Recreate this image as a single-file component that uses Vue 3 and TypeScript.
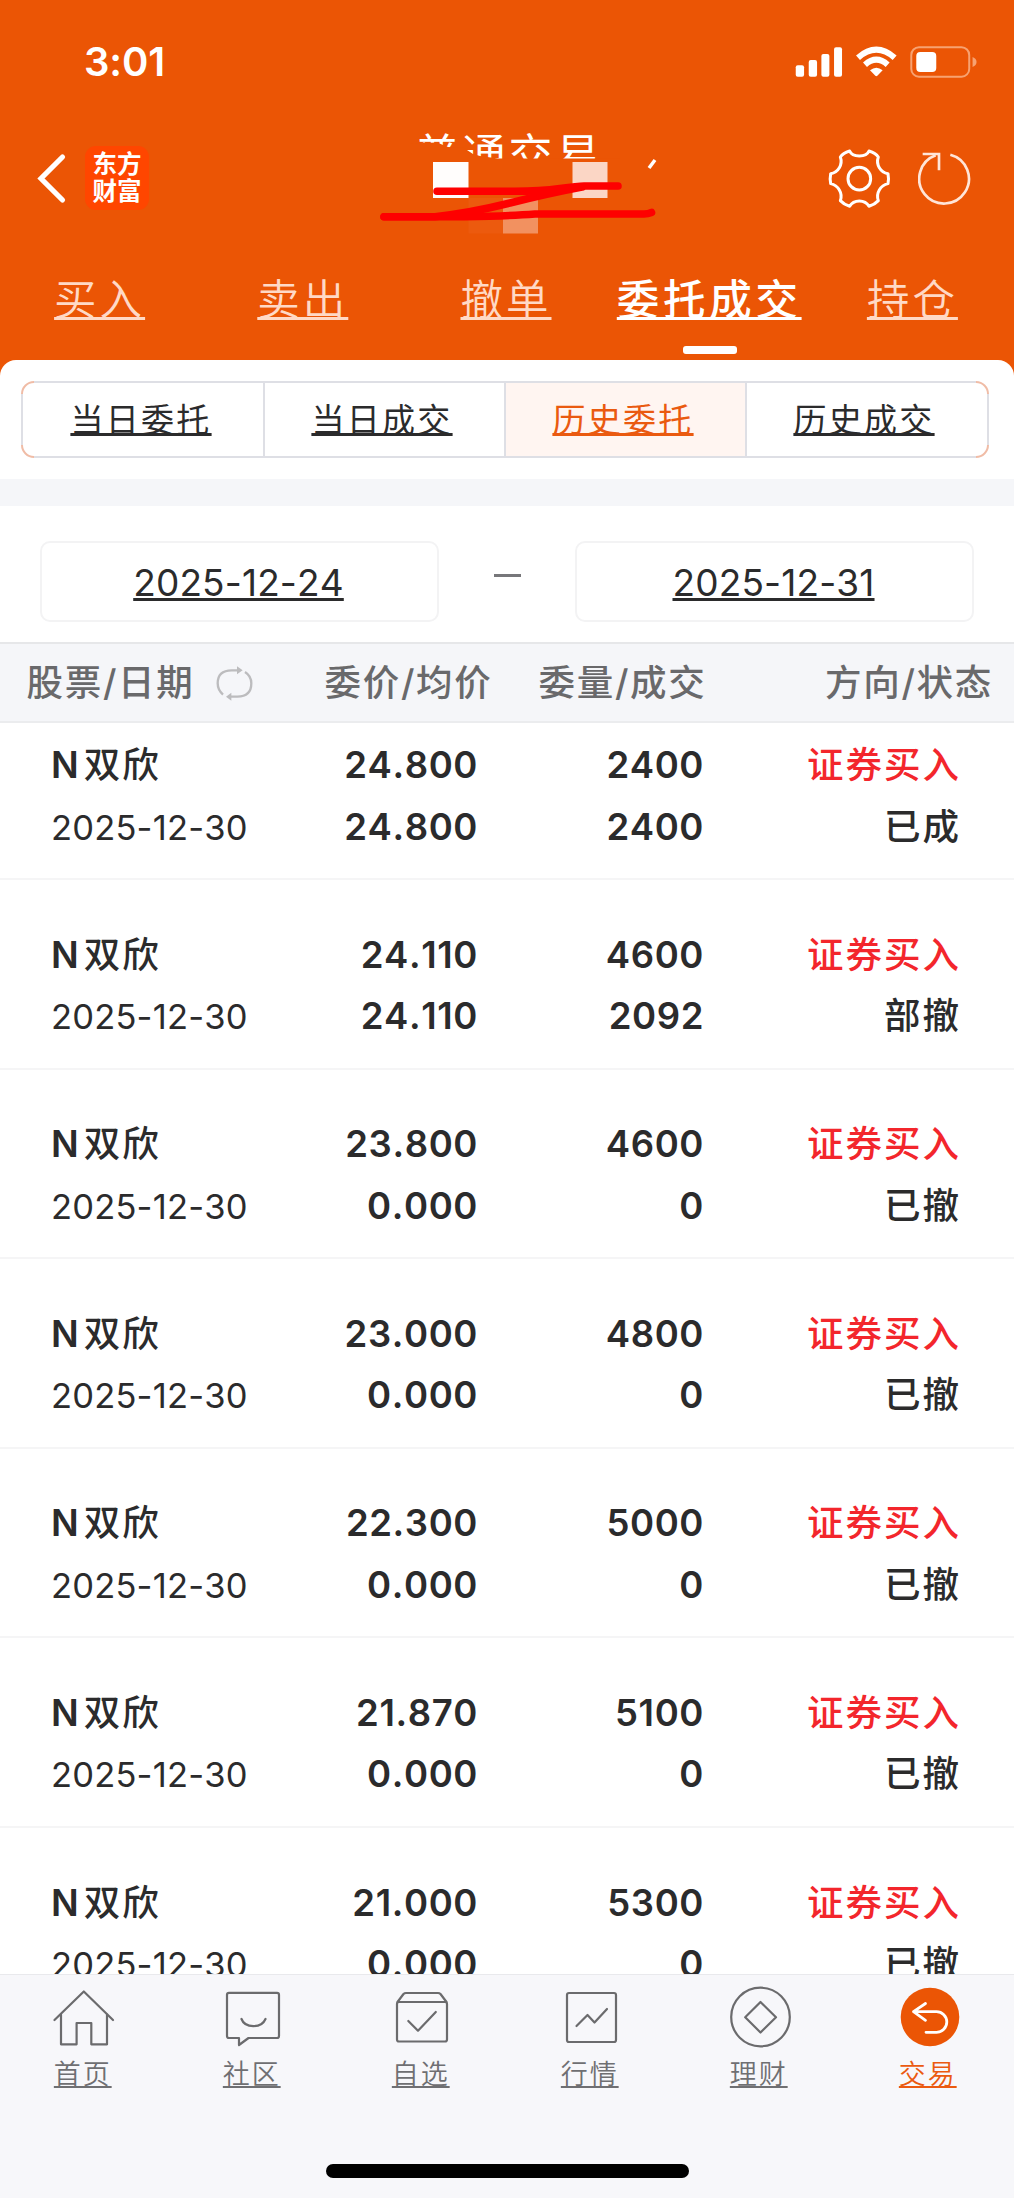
<script setup lang="ts">
interface Order {
  price: string
  avg: string
  qty: number
  done: number
  status: string
}

const tabs: string[] = ['买入', '卖出', '撤单', '委托成交', '持仓']
const activeTab = '委托成交'
const segments: string[] = ['当日委托', '当日成交', '历史委托', '历史成交']
const activeSegment = '历史委托'

const orders: Order[] = [
  { price: '24.800', avg: '24.800', qty: 2400, done: 2400, status: '已成' },
  { price: '24.110', avg: '24.110', qty: 4600, done: 2092, status: '部撤' },
  { price: '23.800', avg: '0.000', qty: 4600, done: 0, status: '已撤' },
  { price: '23.000', avg: '0.000', qty: 4800, done: 0, status: '已撤' },
  { price: '22.300', avg: '0.000', qty: 5000, done: 0, status: '已撤' },
  { price: '21.870', avg: '0.000', qty: 5100, done: 0, status: '已撤' },
  { price: '21.000', avg: '0.000', qty: 5300, done: 0, status: '已撤' },
]

const navItems: string[] = ['首页', '社区', '自选', '行情', '理财', '交易']
</script>

<template>
  <div class="app">
    <header class="top">
      <div class="status">
        <span class="time">3:01</span>
        <svg class="status-icons" viewBox="860 135 550 100" fill="#fff">
          <rect x="865" y="196" width="25" height="34" rx="6" />
          <rect x="904" y="180" width="25" height="50" rx="6" />
          <rect x="942" y="162" width="24" height="68" rx="6" />
          <rect x="980" y="142" width="24" height="88" rx="6" />
          <g fill="none" stroke="#fff" stroke-width="18">
            <path d="M1052 173 Q1107 125 1162 173" />
            <path d="M1073 194 Q1107 164 1141 194" />
          </g>
          <path d="M1088 211 Q1107 196 1126 211 L1110 227 Q1107 230 1104 227 Z" />
          <rect x="1212" y="142" width="174" height="88" rx="23" fill="none" stroke="#f7a271" stroke-width="6" />
          <rect x="1227" y="156" width="60" height="60" rx="12" />
          <path d="M1396 171 Q1408 176 1408 186 T1396 201 Z" fill="#f7a271" />
        </svg>
      </div>

      <div class="bar">
        <svg class="back" viewBox="0 0 30 52" fill="none" stroke="#fff" stroke-width="5.2" stroke-linecap="round" stroke-linejoin="miter">
          <path d="M25.5 5 L4 26.5 L25.5 48" />
        </svg>
        <div class="logo"><span>东方</span><span>财富</span></div>
        <div class="title-wrap">
          <h1 class="title">普通交易</h1>
          <svg class="scribble" viewBox="0 0 320 140">
            <path d="M50 33.500 L77 32.500 L88 37 L104 38 L113 44 L120 46 L138 48.5 H260 V78 H50 Z" fill="#eb5505" />
            <path d="M289 58 L295 50" stroke="#fff" stroke-width="3.5" />
            <rect x="73" y="52" width="35.5" height="36" fill="#fffdfc" />
            <rect x="212.500" y="52" width="35" height="36" fill="#fbd6c5" />
            <rect x="108.500" y="88" width="34.500" height="35.500" fill="#ec5a0e" />
            <rect x="143" y="88" width="35" height="35.500" fill="#f29160" />
            <g fill="none" stroke="#fe0000" stroke-width="7.600" stroke-linecap="round" stroke-linejoin="round">
              <path d="M77 81.300 H155 Q180 81.300 200 78.500 T225 76 H258" />
              <path d="M24 106.700 H75 Q110 103 150 93 T222 77" />
              <path d="M24 106.700 H105 Q150 106 175 104 H284 Q288 104 291.500 102.500" />
            </g>
          </svg>
        </div>
        <svg class="gear" viewBox="960 440 195 190" fill="none" stroke="#fff" stroke-width="9" stroke-linejoin="round">
          <path d="M1028 452 Q1034 467 1057 467 T1086 452 Q1106 458 1114 470 Q1108 487 1117 502 T1143 520 Q1146 535 1143 550 Q1126 554 1117 569 T1114 601 Q1103 613 1086 618 Q1077 602 1057 602 T1028 618 Q1011 613 1000 601 Q1006 584 997 569 T971 550 Q968 535 971 520 Q988 517 997 502 T1000 470 Q1008 458 1028 452 Z" />
          <circle cx="1057" cy="535" r="34" />
        </svg>
        <svg class="reload" viewBox="1230 450 165 170" fill="none" stroke="#ffe5d8" stroke-width="8">
          <path d="M1327 464 A74.500 74.500 0 1 1 1283 466" />
          <path d="M1244 462 H1293 V511" />
        </svg>
      </div>

      <nav class="tabs">
        <a v-for="t in tabs" :key="t" class="tab" :class="{ active: t === activeTab }"><span>{{ t }}</span></a>
      </nav>
    </header>

    <main class="sheet">
      <div class="segments">
        <a v-for="s in segments" :key="s" class="segment" :class="{ active: s === activeSegment }"><span>{{ s }}</span></a>
      </div>
      <div class="gap"></div>
      <div class="dates">
        <div class="date"><span>2025-12-24</span></div>
        <i class="dash"></i>
        <div class="date"><span>2025-12-31</span></div>
      </div>

      <div class="thead">
        <span class="c1">股票/日期
          <svg class="swap" viewBox="643 495 117 112" fill="none" stroke="#bcbcbe" stroke-width="7">
            <path d="M667 584 Q651 570 651 550 Q651 511 693 511 H716" />
            <path d="M733 516 Q752 528 752 550 Q752 590 710 590 H684" />
            <path d="M709 499 L726 511 L709 523 Z M692 578 L676 590 L692 602 Z" fill="#bcbcbe" stroke="none" />
          </svg>
        </span>
        <span class="c2">委价/均价</span>
        <span class="c3">委量/成交</span>
        <span class="c4">方向/状态</span>
      </div>

      <div class="list">
        <div v-for="(o, i) in orders" :key="i" class="row">
          <span class="name">N<b>双欣</b></span>
          <span class="num">{{ o.price }}</span>
          <span class="num">{{ o.qty }}</span>
          <span class="side">证券买入</span>
          <span class="day">2025-12-30</span>
          <span class="num">{{ o.avg }}</span>
          <span class="num">{{ o.done }}</span>
          <span class="state">{{ o.status }}</span>
        </div>
      </div>
    </main>

    <footer class="bottom">
      <div class="nav">
        <a v-for="(n, i) in navItems" :key="n" class="nav-item" :class="{ active: i === 5 }">
          <svg viewBox="0 0 62 64" fill="none" stroke="#6b6b6d" stroke-width="2.2" stroke-linecap="round" stroke-linejoin="round">
            <g v-if="i === 0">
              <path d="M1.500 35 L30.800 6.500 L60 35" />
              <path d="M8 29.500 V59.300 H23.600 V38 H38.300 V59.300 H54 V29.500" />
            </g>
            <path v-else-if="i === 1" d="M7 7.800 H55 Q57 7.800 57 9.800 V51 Q57 53 55 53 H26.500 L17 60 V53 H7 Q5 53 5 51 V9.800 Q5 7.800 7 7.800 Z M19.500 34 C23 43.500 39.500 43.500 43.500 34" />
            <g v-else-if="i === 2">
              <rect x="6" y="17" width="50" height="39.500" rx="2" />
              <path d="M6.500 17 L12.500 9 Q13.500 8 15 8 H47 Q48.500 8 49.500 9 L55.500 17" />
              <path d="M17.300 36 L27 45.700 L44.800 27" />
            </g>
            <g v-else-if="i === 3">
              <rect x="7" y="8" width="49" height="49" rx="2" />
              <path d="M16.500 41 L27.500 30 L34.500 37.500 L47 24" />
            </g>
            <g v-else-if="i === 4">
              <circle cx="31.500" cy="32" r="29.300" />
              <path d="M31.500 17 L47 32.300 L31.500 47.500 L16.200 32.300 Z" />
            </g>
            <g v-else>
              <circle cx="32" cy="32" r="29.300" fill="#eb5505" stroke="none" />
              <path d="M27.500 18.500 L15.500 26.700 L27.500 35.300 M15.500 26.700 H38.500 A10.300 10.300 0 0 1 38.500 47.300 H28" stroke="#fff" stroke-width="2.800" />
            </g>
          </svg>
          <span>{{ n }}</span>
        </a>
      </div>
      <div class="home-bar"></div>
    </footer>
  </div>
</template>

<style>
body {
  margin: 0;
  background: #fff;
}
</style>

<style scoped>
.app {
  width: 1014px;
  height: 2198px;
  display: flex;
  flex-direction: column;
  overflow: hidden;
  background: #eb5505;
  color: #2b2b2c;
  font-family: Inter, "Noto Sans CJK SC", sans-serif;
  font-kerning: none;
}
.top {
  height: 359.500px;
  flex: none;
  color: #fff;
}
.status {
  height: 78px;
  padding: 45px 37px 0 84px;
  box-sizing: border-box;
  display: flex;
  justify-content: space-between;
}
.time {
  font-size: 40px;
  font-weight: 600;
  line-height: 34px;
  letter-spacing: -0.1px;
}
.status-icons {
  width: 183.300px;
  height: 33.300px;
}
.bar {
  height: 174px;
  display: flex;
  align-items: flex-start;
}
.back {
  width: 30px;
  height: 52px;
  margin: 74px 0 0 36.500px;
}
.logo {
  width: 64px;
  height: 64px;
  margin: 67.500px 0 0 18.500px;
  border-radius: 11px;
  background: #ff4600;
  display: flex;
  flex-direction: column;
  align-items: center;
  justify-content: center;
  font-size: 24.500px;
  font-weight: 700;
  line-height: 27px;
}
.title-wrap {
  position: relative;
  width: 320px;
  height: 140px;
  margin: 32px 0 0 211px;
}
.title {
  margin: 23px 0 0;
  padding-left: 55px;
  font-size: 44px;
  font-weight: 400;
  line-height: 44px;
  letter-spacing: 2.800px;
  white-space: nowrap;
}
.scribble {
  position: absolute;
  left: 0;
  top: 0;
  width: 320px;
  height: 140px;
}
.gear {
  width: 65px;
  height: 63.300px;
  margin: 68.700px 0 0 147px;
}
.reload {
  width: 55px;
  height: 56.700px;
  margin: 72px 0 0 26px;
}
.tabs {
  display: grid;
  grid-template-columns: repeat(5, 1fr);
  margin: 16px 0 0 -2px;
  height: 91px;
}
.tab {
  display: flex;
  flex-direction: column;
  align-items: center;
  color: #ffd9c6;
  font-size: 42.500px;
  font-weight: 350;
  line-height: 64px;
  letter-spacing: 3px;
}
.tab span {
  text-decoration: underline 2.500px;
  text-underline-offset: 2px;
  text-decoration-skip-ink: none;
}
.tab.active {
  color: #fff;
  font-weight: 500;
  letter-spacing: 3.700px;
}
.tab.active::after {
  content: "";
  width: 54px;
  height: 8.500px;
  margin: 13.500px 0 0 2px;
  border-radius: 3px;
  background: #fff;
}
.sheet {
  flex: none;
  height: 1614.500px;
  overflow: hidden;
  background: #fff;
  border-radius: 16px 16px 0 0;
}
.segments {
  position: relative;
  display: grid;
  grid-template-columns: repeat(4, 1fr);
  margin: 21.500px 25px 0 21px;
  height: 77px;
  box-sizing: border-box;
  border: 2px solid #f0bca6;
  border-radius: 13px;
}
.segments::before,
.segments::after {
  content: "";
  position: absolute;
  pointer-events: none;
}
.segments::before {
  inset: -2px 11px;
  border: solid #dedfe5;
  border-width: 2px 0;
}
.segments::after {
  inset: 11px -2px;
  border: solid #dedfe5;
  border-width: 0 2px;
}
.segment {
  margin-left: -1px;
  padding-right: 6px;
  text-align: center;
  font-size: 33px;
  line-height: 74px;
  letter-spacing: 2.300px;
  border-left: 2px solid #dedfe5;
}
.segment:first-child {
  border-left-color: transparent;
}
.segment span {
  text-decoration: underline 3px;
  text-underline-offset: 1px;
  text-decoration-skip-ink: none;
}
.segment.active {
  color: #ea5a10;
  background: #fff5f1;
}
.gap {
  height: 27px;
  margin-top: 21px;
  background: #f5f6f9;
}
.dates {
  display: flex;
  height: 136px;
  box-sizing: border-box;
  padding: 35px 40px 0 40px;
  justify-content: space-between;
}
.date {
  width: 399px;
  height: 81px;
  box-sizing: border-box;
  border: 2px solid #f3f3f4;
  border-radius: 10px;
  padding-right: 2px;
  text-align: center;
  font-size: 37px;
  line-height: 80px;
  letter-spacing: 0.150px;
}
.date span {
  text-decoration: underline 3px;
  text-underline-offset: 2px;
  text-decoration-skip-ink: none;
}
.dash {
  width: 27px;
  height: 2.500px;
  margin-top: 33px;
  background: #77777a;
}
.thead {
  display: grid;
  grid-template-columns: 252px 214px 214px 1fr;
  height: 81px;
  box-sizing: border-box;
  padding: 0 21px 0 26.500px;
  border-top: 2px solid #e6e7e9;
  border-bottom: 2px solid #ebecee;
  background: #f5f6f9;
  color: #69696b;
  font-size: 36.500px;
  font-weight: 500;
  line-height: 79px;
  letter-spacing: 1.700px;
  white-space: nowrap;
}
.c1 {
  display: flex;
  align-items: center;
}
.swap {
  width: 39px;
  height: 37.300px;
  margin-left: 20px;
}
.c2,
.c3,
.c4 {
  text-align: right;
}
.list {
  margin-top: -32.500px;
}
.row {
  display: grid;
  grid-template-columns: 217px 210px 226px 1fr;
  grid-template-rows: 61.500px 61.500px;
  height: 189.600px;
  box-sizing: border-box;
  padding: 44.500px 53px 0 51px;
  border-bottom: 2px solid #f5f5f6;
  font-size: 36.500px;
  line-height: 61.500px;
  white-space: nowrap;
}
.thead + .list .row:first-child {
  clip-path: inset(33px 0 0 0);
}
.name {
  font-weight: 600;
}
.name b {
  font-weight: 500;
  margin-left: 5px;
  letter-spacing: 2px;
}
.num {
  text-align: right;
  font-weight: 600;
  letter-spacing: 0.600px;
}
.side,
.state {
  text-align: right;
  font-weight: 500;
  letter-spacing: 2px;
}
.side {
  color: #f3262c;
}
.day {
  font-size: 34.500px;
  letter-spacing: 0.200px;
}
.bottom {
  flex: 1;
  box-sizing: border-box;
  border-top: 1.500px solid #e9e9ec;
  background: #f7f7fa;
}
.nav {
  display: grid;
  grid-template-columns: repeat(6, 1fr);
  height: 189px;
  padding-top: 10px;
  box-sizing: border-box;
}
.nav-item {
  display: flex;
  flex-direction: column;
  align-items: center;
  color: #6f6f72;
}
.nav-item svg {
  width: 62px;
  height: 64px;
  margin-right: 1px;
}
.nav-item span {
  margin: 6.500px 3.500px 0 0;
  font-size: 27px;
  line-height: 38px;
  letter-spacing: 1.900px;
  font-weight: 350;
  text-decoration: underline 2px;
  text-underline-offset: 2px;
  text-decoration-skip-ink: none;
}
.nav-item.active {
  color: #eb5a10;
}
.home-bar {
  width: 363px;
  height: 14px;
  margin: 0 auto;
  border-radius: 7px;
  background: #000;
}
</style>
